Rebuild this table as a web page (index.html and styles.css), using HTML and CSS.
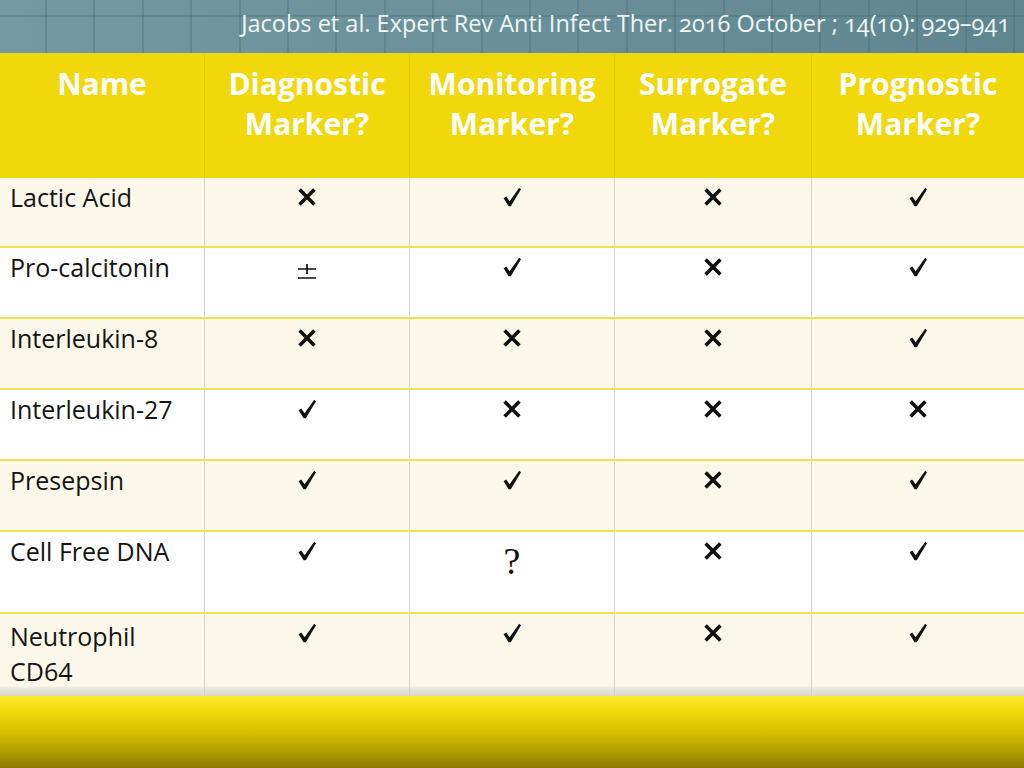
FILE: index.html
```html
<!DOCTYPE html>
<html lang="en">
<head>
<meta charset="utf-8">
<title>Sepsis biomarkers</title>
<link rel="stylesheet" href="styles.css">
</head>
<body>
<div class="slide">
  <header class="topbar">
    <p class="cite">Jacobs et al. Expert Rev Anti Infect Ther. 2016 October ; 14(10): 929–941</p>
  </header>

  <div class="table" role="table">
    <div class="row head" role="row">
      <div class="cell" role="columnheader">Name</div>
      <div class="cell" role="columnheader">Diagnostic<br>Marker?</div>
      <div class="cell" role="columnheader">Monitoring<br>Marker?</div>
      <div class="cell" role="columnheader">Surrogate<br>Marker?</div>
      <div class="cell" role="columnheader">Prognostic<br>Marker?</div>
    </div>

    <div class="row odd r1" role="row">
      <div class="cell name">Lactic Acid</div>
      <div class="cell mark"><svg class="ico" viewBox="0 0 20 20"><use href="#x"/></svg></div>
      <div class="cell mark"><svg class="ico" viewBox="0 0 20 20"><use href="#v"/></svg></div>
      <div class="cell mark"><svg class="ico" viewBox="0 0 20 20"><use href="#x"/></svg></div>
      <div class="cell mark"><svg class="ico" viewBox="0 0 20 20"><use href="#v"/></svg></div>
    </div>

    <div class="row even" role="row">
      <div class="cell name">Pro-calcitonin</div>
      <div class="cell mark"><svg class="pm" viewBox="0 0 20 15"><path d="M1 5h18M10 0v10M1 14h18" fill="none" stroke="#111" stroke-width="1.7"/></svg></div>
      <div class="cell mark"><svg class="ico" viewBox="0 0 20 20"><use href="#v"/></svg></div>
      <div class="cell mark"><svg class="ico" viewBox="0 0 20 20"><use href="#x"/></svg></div>
      <div class="cell mark"><svg class="ico" viewBox="0 0 20 20"><use href="#v"/></svg></div>
    </div>

    <div class="row odd" role="row">
      <div class="cell name">Interleukin-8</div>
      <div class="cell mark"><svg class="ico" viewBox="0 0 20 20"><use href="#x"/></svg></div>
      <div class="cell mark"><svg class="ico" viewBox="0 0 20 20"><use href="#x"/></svg></div>
      <div class="cell mark"><svg class="ico" viewBox="0 0 20 20"><use href="#x"/></svg></div>
      <div class="cell mark"><svg class="ico" viewBox="0 0 20 20"><use href="#v"/></svg></div>
    </div>

    <div class="row even" role="row">
      <div class="cell name">Interleukin-27</div>
      <div class="cell mark"><svg class="ico" viewBox="0 0 20 20"><use href="#v"/></svg></div>
      <div class="cell mark"><svg class="ico" viewBox="0 0 20 20"><use href="#x"/></svg></div>
      <div class="cell mark"><svg class="ico" viewBox="0 0 20 20"><use href="#x"/></svg></div>
      <div class="cell mark"><svg class="ico" viewBox="0 0 20 20"><use href="#x"/></svg></div>
    </div>

    <div class="row odd" role="row">
      <div class="cell name">Presepsin</div>
      <div class="cell mark"><svg class="ico" viewBox="0 0 20 20"><use href="#v"/></svg></div>
      <div class="cell mark"><svg class="ico" viewBox="0 0 20 20"><use href="#v"/></svg></div>
      <div class="cell mark"><svg class="ico" viewBox="0 0 20 20"><use href="#x"/></svg></div>
      <div class="cell mark"><svg class="ico" viewBox="0 0 20 20"><use href="#v"/></svg></div>
    </div>

    <div class="row even tall" role="row">
      <div class="cell name">Cell Free DNA</div>
      <div class="cell mark"><svg class="ico" viewBox="0 0 20 20"><use href="#v"/></svg></div>
      <div class="cell mark"><span class="q">?</span></div>
      <div class="cell mark"><svg class="ico" viewBox="0 0 20 20"><use href="#x"/></svg></div>
      <div class="cell mark"><svg class="ico" viewBox="0 0 20 20"><use href="#v"/></svg></div>
    </div>

    <div class="row odd last" role="row">
      <div class="cell name">Neutrophil<br>CD64</div>
      <div class="cell mark"><svg class="ico" viewBox="0 0 20 20"><use href="#v"/></svg></div>
      <div class="cell mark"><svg class="ico" viewBox="0 0 20 20"><use href="#v"/></svg></div>
      <div class="cell mark"><svg class="ico" viewBox="0 0 20 20"><use href="#x"/></svg></div>
      <div class="cell mark"><svg class="ico" viewBox="0 0 20 20"><use href="#v"/></svg></div>
    </div>
  </div>

  <footer class="footbar"></footer>
</div>

<svg class="defs" width="0" height="0" aria-hidden="true">
  <defs>
    <g id="x"><path d="M2.6 2.6L17.4 17.4M17.4 2.6L2.6 17.4" fill="none" stroke="#111" stroke-width="3.6"/></g>
    <g id="v"><path d="M1.6 11.2L4.2 9.6L7.6 14.2L17.2 0.8L19 2.2L8.8 19.2L6.6 19.2Z" fill="#111"/></g>
  </defs>
</svg>
</body>
</html>
```

FILE: styles.css
```css
html, body {
  margin: 0;
  padding: 0;
  background: #ffffff;
}

.slide {
  width: 1024px;
  height: 768px;
  overflow: hidden;
  display: flex;
  flex-direction: column;
  font-family: "Open Sans", "DejaVu Sans", sans-serif;
}

.topbar {
  height: 53px;
  flex: none;
  box-sizing: border-box;
  padding: 9px 14px 0 0;
  background:
    linear-gradient(180deg, transparent 15px, rgba(70, 105, 115, 0.35) 15px, rgba(70, 105, 115, 0.35) 17px, transparent 17px),
    repeating-linear-gradient(90deg, transparent 0, transparent 45px, rgba(70, 105, 115, 0.35) 45px, rgba(70, 105, 115, 0.35) 47px, transparent 47px, transparent 48.4px),
    linear-gradient(90deg, #7399a2 0%, #6a919b 50%, #5e8590 100%);
}

.cite {
  margin: 0;
  text-align: right;
  color: #f1f5f5;
  font-size: 23.5px;
  line-height: 28px;
  font-variant-numeric: oldstyle-nums;
  white-space: nowrap;
}

.table {
  flex: none;
  display: flex;
  flex-direction: column;
}

.row {
  display: grid;
  grid-template-columns: 204px 205px 205px 197px 213px;
  box-sizing: border-box;
  height: 71px;
  border-bottom: 2px solid #f1e150;
}

.row.head {
  height: 125px;
  background: #f1d80b;
  border-bottom: none;
}

.row.r1 { height: 70px; }
.row.tall { height: 82px; }
.row.last {
  height: 82px;
  border-bottom: none;
  background: linear-gradient(180deg, #fbf8e9 0, #fbf8e9 72px, #ebe8dc 74px, #d9d6cb 82px);
}

.row.odd { background-color: #fbf8e9; }
.row.even { background-color: #ffffff; }
.row.last { background-color: transparent; }

.cell {
  box-sizing: border-box;
  border-left: 1px solid #d6d3c8;
}

.cell:first-child { border-left: none; }

.head .cell {
  border-left-color: #e3ca0a;
  color: #ffffff;
  font-weight: 700;
  font-size: 30px;
  line-height: 40px;
  text-align: center;
  padding-top: 11px;
}

.name {
  color: #141414;
  font-size: 25px;
  line-height: 35px;
  padding: 2px 0 0 10px;
}

.last .name { padding-top: 5px; }

.mark {
  display: flex;
  justify-content: center;
  align-items: flex-start;
  padding-top: 9px;
}

.ico {
  width: 20px;
  height: 20px;
  display: block;
}

.pm {
  width: 20px;
  height: 15px;
  display: block;
  margin-top: 7px;
}

.q {
  font-family: "Liberation Serif", serif;
  font-size: 38px;
  line-height: 38px;
  color: #111;
  margin-top: 1px;
}

.footbar {
  flex: 1;
  background: linear-gradient(180deg, #fbe92c 0%, #f3dc0e 18%, #d9c100 50%, #b19c00 78%, #8c7800 100%);
}

.defs {
  position: absolute;
  width: 0;
  height: 0;
}
```
